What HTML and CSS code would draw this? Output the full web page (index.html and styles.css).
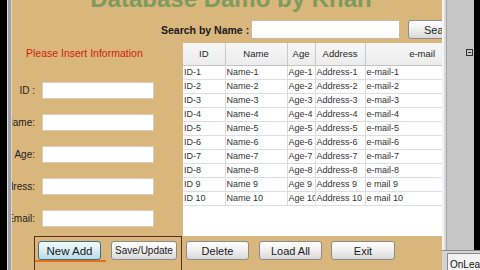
FILE: index.html
```html
<!DOCTYPE html>
<html lang="en">
<head>
    <meta charset="UTF-8">
    <meta name="viewport" content="width=device-width, initial-scale=1.0">
    <title>Database Damo by Khan</title>
    <link rel="stylesheet" href="styles.css">
</head>
<body>
<div class="screen">
    <div class="edge-left"></div>

    <div class="panel">
        <h1 class="title">Database Damo by Khan</h1>

        <!-- search -->
        <div class="search">
            <label class="search-label">Search by Name :</label>
            <input class="search-input" type="text">
            <button class="btn search-btn">Search</button>
        </div>

        <div class="content">
            <!-- form -->
            <div class="form">
                <p class="hint">Please Insert Information</p>
                <div class="field"><label>ID :</label><input type="text"></div>
                <div class="field"><label>Name:</label><input type="text"></div>
                <div class="field"><label>Age:</label><input type="text"></div>
                <div class="field"><label>Address:</label><input type="text"></div>
                <div class="field"><label>Email:</label><input type="text"></div>
            </div>

            <!-- data grid -->
            <div class="grid">
                <table>
                    <colgroup>
                        <col style="width:42px">
                        <col style="width:62px">
                        <col style="width:28px">
                        <col style="width:50px">
                        <col style="width:77px">
                    </colgroup>
                    <thead>
                        <tr><th>ID</th><th>Name</th><th>Age</th><th>Address</th><th class="th-mail">e-mail</th></tr>
                    </thead>
                    <tbody>
                        <tr><td>ID-1</td><td>Name-1</td><td>Age-1</td><td>Address-1</td><td>e-mail-1</td></tr>
                        <tr><td>ID-2</td><td>Name-2</td><td>Age-2</td><td>Address-2</td><td>e-mail-2</td></tr>
                        <tr><td>ID-3</td><td>Name-3</td><td>Age-3</td><td>Address-3</td><td>e-mail-3</td></tr>
                        <tr><td>ID-4</td><td>Name-4</td><td>Age-4</td><td>Address-4</td><td>e-mail-4</td></tr>
                        <tr><td>ID-5</td><td>Name-5</td><td>Age-5</td><td>Address-5</td><td>e-mail-5</td></tr>
                        <tr><td>ID-6</td><td>Name-6</td><td>Age-6</td><td>Address-6</td><td>e-mail-6</td></tr>
                        <tr><td>ID-7</td><td>Name-7</td><td>Age-7</td><td>Address-7</td><td>e-mail-7</td></tr>
                        <tr><td>ID-8</td><td>Name-8</td><td>Age-8</td><td>Address-8</td><td>e-mail-8</td></tr>
                        <tr><td>ID 9</td><td>Name 9</td><td>Age 9</td><td>Address 9</td><td>e mail 9</td></tr>
                        <tr><td>ID 10</td><td>Name 10</td><td>Age 10</td><td>Address 10</td><td>e mail 10</td></tr>
                    </tbody>
                </table>
            </div>
        </div>

        <!-- buttons -->
        <div class="actions">
            <div class="focus-frame">
                <button class="btn btn-new">New Add</button>
                <button class="btn btn-save">Save/Update</button>
            </div>
            <button class="btn btn-delete">Delete</button>
            <button class="btn btn-load">Load All</button>
            <button class="btn btn-exit">Exit</button>
        </div>
    </div>

    <div class="side">
        <div class="side-top">
            <div class="side-edge"></div>
            <div class="side-panel">
                <svg width="7" height="7" viewBox="0 0 7 7">
                    <rect x="0.5" y="0.5" width="6" height="6" fill="none" stroke="#333" stroke-width="1"/>
                    <line x1="2" y1="3.5" x2="5" y2="3.5" stroke="#333" stroke-width="1"/>
                </svg>
            </div>
            <div class="side-black"></div>
        </div>
        <div class="side-bottom">
            <div class="status">OnLeave</div>
        </div>
    </div>
</div>
</body>
</html>
```

FILE: styles.css
```css
* {
    margin: 0;
    padding: 0;
    box-sizing: border-box;
}

body {
    background-color: #000;
    font-family: "Liberation Sans", Arial, sans-serif;
}

.screen {
    display: flex;
    width: 480px;
    height: 270px;
    overflow: hidden;
    padding-left: 7px;
}

.edge-left {
    width: 5px;
    flex-shrink: 0;
    background: linear-gradient(to right, #dedede 1px, #a0a0a0 1px, #a0a0a0 4px, #d6d6d6 4px);
}

.panel {
    width: 430px;
    flex-shrink: 0;
    background-color: #d9b67b;
    display: flex;
    flex-direction: column;
    overflow: hidden;
}

.title {
    margin-top: -13px;
    padding-left: 8px;
    height: 24px;
    font-size: 24px;
    line-height: 24px;
    font-weight: bold;
    text-align: center;
    color: #7f9a5d;
    white-space: nowrap;
}

.search {
    margin-top: 9px;
    height: 19px;
    display: flex;
    align-items: center;
    padding-left: 149px;
}

.search-label {
    width: 90px;
    flex-shrink: 0;
    font-size: 10.5px;
    font-weight: bold;
    color: #1a1a1a;
    white-space: nowrap;
}

.search-input {
    width: 149px;
    height: 19px;
    flex-shrink: 0;
    border: 1px solid #c9bb9f;
    background: #fff;
    margin-right: 8px;
}

.search-btn {
    width: 70px;
    flex-shrink: 0;
    text-align: left;
    padding-left: 15px !important;
}

.content {
    margin-top: 4px;
    height: 193px;
    display: flex;
}

.form {
    width: 171px;
    flex-shrink: 0;
    display: flex;
    flex-direction: column;
    gap: 15px;
}

.hint {
    margin: 4px 0 8px 14px;
    font-size: 10.5px;
    line-height: 12px;
    color: #d4200e;
    white-space: nowrap;
}

.field {
    display: flex;
    align-items: center;
    height: 17px;
}

.field label {
    width: 23px;
    flex-shrink: 0;
    display: flex;
    justify-content: flex-end;
    font-size: 10px;
    color: #222;
    white-space: nowrap;
}

.field input {
    margin-left: 7px;
    width: 112px;
    height: 17px;
    border: 1px solid #d8ccb6;
    background: #fff;
}

.grid {
    width: 259px;
    flex-shrink: 0;
    background-color: #fff;
    overflow: hidden;
}

.grid table {
    width: 259px;
    table-layout: fixed;
    border-collapse: collapse;
    font-size: 9px;
    color: #333;
}

.grid th {
    height: 22px;
    font-size: 9.5px;
    font-weight: normal;
    color: #1e1e1e;
    background: linear-gradient(#f6f6f6, #ececec);
    border-right: 1px solid #c9c9c9;
    border-bottom: 1px solid #c4c4c4;
    text-align: center;
    white-space: nowrap;
    overflow: hidden;
}

.grid th.th-mail {
    text-align: right;
    padding-right: 7px;
    border-right: none;
}

.grid td {
    height: 14px;
    padding: 0 1px;
    line-height: 13px;
    border-right: 1px solid #dcdcdc;
    border-bottom: 1px solid #dcdce4;
    white-space: nowrap;
    overflow: hidden;
    text-overflow: clip;
}

.grid td:last-child {
    border-right: none;
}

.actions {
    flex: 1;
    display: flex;
    align-items: flex-start;
    padding-left: 22px;
}

.focus-frame {
    position: relative;
    align-self: stretch;
    display: flex;
    align-items: flex-start;
    gap: 10px;
    padding: 4px 4px 0 3px;
    border: 1px solid #5c2c1c;
    border-bottom: none;
}

.focus-frame::after {
    content: "";
    position: absolute;
    left: 0;
    top: 23px;
    width: 71px;
    height: 2px;
    background-color: #e5701c;
}

.btn {
    height: 19px;
    padding: 0;
    font-family: "Liberation Sans", Arial, sans-serif;
    font-size: 11px;
    color: #1a1a1a;
    border: 1px solid #8c8c8c;
    border-radius: 3px;
    background: linear-gradient(#ffffff, #efefef 50%, #d8d8d8);
    flex-shrink: 0;
}

.btn-new {
    width: 63px;
    font-size: 11.5px;
    border-color: #3f6f7c;
    background: linear-gradient(#f0fafc, #d8eef4 50%, #b9dbe5);
}

.btn-save {
    width: 66px;
    font-size: 10px;
}

.btn-delete {
    width: 63px;
    margin: 5px 0 0 4px;
}

.btn-load {
    width: 63px;
    margin: 5px 0 0 10px;
}

.btn-exit {
    width: 64px;
    margin: 5px 0 0 9px;
}

.side {
    width: 38px;
    flex-shrink: 0;
    display: flex;
    flex-direction: column;
}

.side-top {
    height: 252px;
    display: flex;
}

.side-edge {
    width: 5px;
    background: linear-gradient(to right, #f4f4f4 2px, #dadada 2px, #dadada 4px, #a6a6a6 4px);
}

.side-panel {
    width: 27px;
    background-color: #c6c6c6;
    padding: 49px 0 0 19px;
}

.side-panel svg {
    display: block;
}

.side-black {
    width: 6px;
    background-color: #000;
}

.side-bottom {
    flex: 1;
    background-color: #d4d4d4;
    border-top: 1px solid #8a8a8a;
    padding: 2px 0 0 5px;
}

.status {
    height: 100%;
    background-color: #f2f2f2;
    border-left: 1px solid #8a8a8a;
    border-top: 1px solid #8a8a8a;
    padding: 5px 0 0 2px;
    font-size: 10px;
    line-height: 11px;
    color: #111;
    white-space: nowrap;
    overflow: hidden;
}
```
